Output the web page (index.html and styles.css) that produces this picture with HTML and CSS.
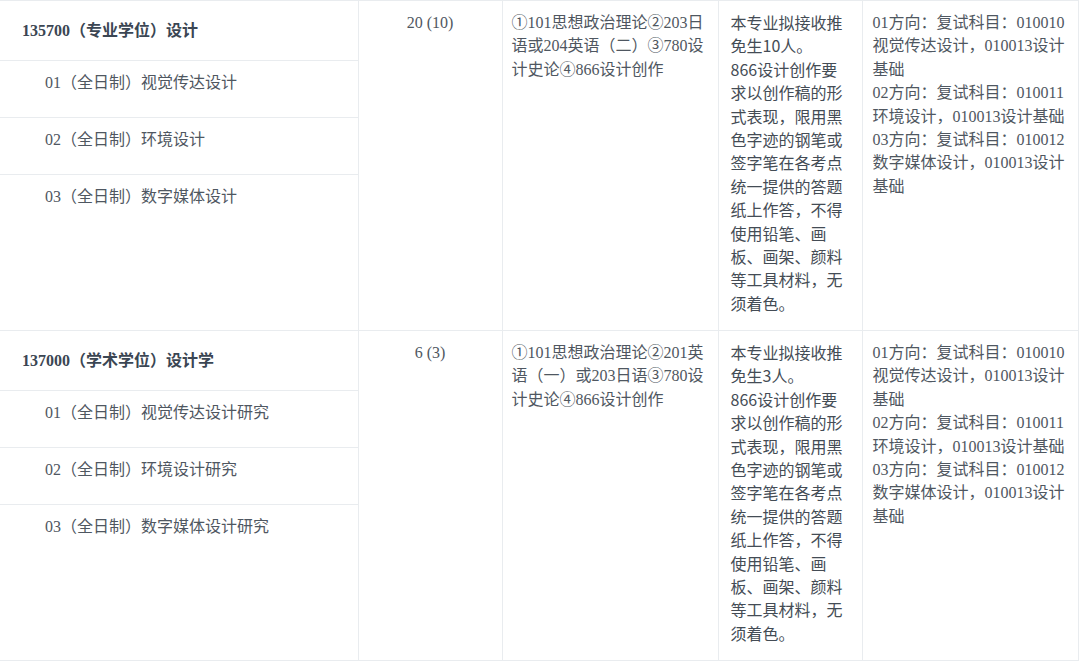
FILE: index.html
```html
<!DOCTYPE html>
<html lang="zh-CN">
<head>
<meta charset="utf-8">
<title>招生目录</title>
<link rel="stylesheet" href="styles.css">
</head>
<body>
<table class="catalog">
  <colgroup>
    <col class="c-major">
    <col class="c-num">
    <col class="c-exam">
    <col class="c-note">
    <col class="c-retest">
  </colgroup>
  <tbody>
    <tr class="r-head">
      <td class="major-head">135700（专业学位）设计</td>
      <td class="num" rowspan="4">20 (10)</td>
      <td class="exam" rowspan="4">①101思想政治理论②203日语或204英语（二）③780设计史论④866设计创作</td>
      <td class="note" rowspan="4">本专业拟接收推免生10人。<br>866设计创作要求以创作稿的形式表现，限用黑色字迹的钢笔或签字笔在各考点统一提供的答题纸上作答，不得使用铅笔、画板、画架、颜料等工具材料，无须着色。</td>
      <td class="retest" rowspan="4">01方向：复试科目：010010视觉传达设计，010013设计基础<br>02方向：复试科目：010011环境设计，010013设计基础<br>03方向：复试科目：010012数字媒体设计，010013设计基础</td>
    </tr>
    <tr class="r-sub"><td class="dir">01（全日制）视觉传达设计</td></tr>
    <tr class="r-sub"><td class="dir">02（全日制）环境设计</td></tr>
    <tr class="r-last"><td class="dir">03（全日制）数字媒体设计</td></tr>

    <tr class="r-head">
      <td class="major-head">137000（学术学位）设计学</td>
      <td class="num" rowspan="4">6 (3)</td>
      <td class="exam" rowspan="4">①101思想政治理论②201英语（一）或203日语③780设计史论④866设计创作</td>
      <td class="note" rowspan="4">本专业拟接收推免生3人。<br>866设计创作要求以创作稿的形式表现，限用黑色字迹的钢笔或签字笔在各考点统一提供的答题纸上作答，不得使用铅笔、画板、画架、颜料等工具材料，无须着色。</td>
      <td class="retest" rowspan="4">01方向：复试科目：010010视觉传达设计，010013设计基础<br>02方向：复试科目：010011环境设计，010013设计基础<br>03方向：复试科目：010012数字媒体设计，010013设计基础</td>
    </tr>
    <tr class="r-sub"><td class="dir">01（全日制）视觉传达设计研究</td></tr>
    <tr class="r-sub"><td class="dir">02（全日制）环境设计研究</td></tr>
    <tr class="r-last"><td class="dir">03（全日制）数字媒体设计研究</td></tr>
  </tbody>
</table>
</body>
</html>
```

FILE: styles.css
```css
html, body {
  margin: 0;
  padding: 0;
  background: #ffffff;
}

body {
  font-family: "Liberation Serif", "Noto Sans CJK SC", serif;
  font-size: 16px;
  line-height: 23.4px;
  color: #4f5761;
}

.catalog {
  width: 1078px;
  border-collapse: collapse;
  table-layout: fixed;
  border-top: 1px solid #eceef0;
  border-bottom: 1px solid #e3e8ee;
  border-right: 1px solid #eceef0;
}

.c-major { width: 358px; }
.c-num { width: 144px; }
.c-exam { width: 216px; }
.c-note { width: 144px; }
.c-retest { width: 216px; }

.catalog td {
  border: 1px solid #e9ecef;
  vertical-align: top;
  padding: 10px 10px 0 10px;
  word-break: break-all;
}

.catalog td.major-head,
.catalog td.dir {
  border-left: none;
}

.r-head { height: 60px; }
.r-sub { height: 57px; }
.r-last { height: 156px; }

.catalog td.major-head {
  vertical-align: middle;
  padding: 0 10px 0 22px;
  font-weight: bold;
  color: #3b4653;
}

.catalog td.dir {
  padding-left: 45px;
}

.catalog td.num {
  text-align: center;
  padding-top: 10px;
}

.catalog td.exam {
  padding-left: 9px;
  padding-right: 10px;
  line-break: strict;
  word-break: normal;
}

.catalog td.note {
  font-family: "Noto Sans CJK SC", "Liberation Sans", sans-serif;
  color: #444c55;
  padding-left: 12px;
  padding-right: 18px;
  word-break: normal;
  line-break: strict;
}

.catalog td.retest {
  padding-left: 10px;
  padding-right: 10px;
}
```
